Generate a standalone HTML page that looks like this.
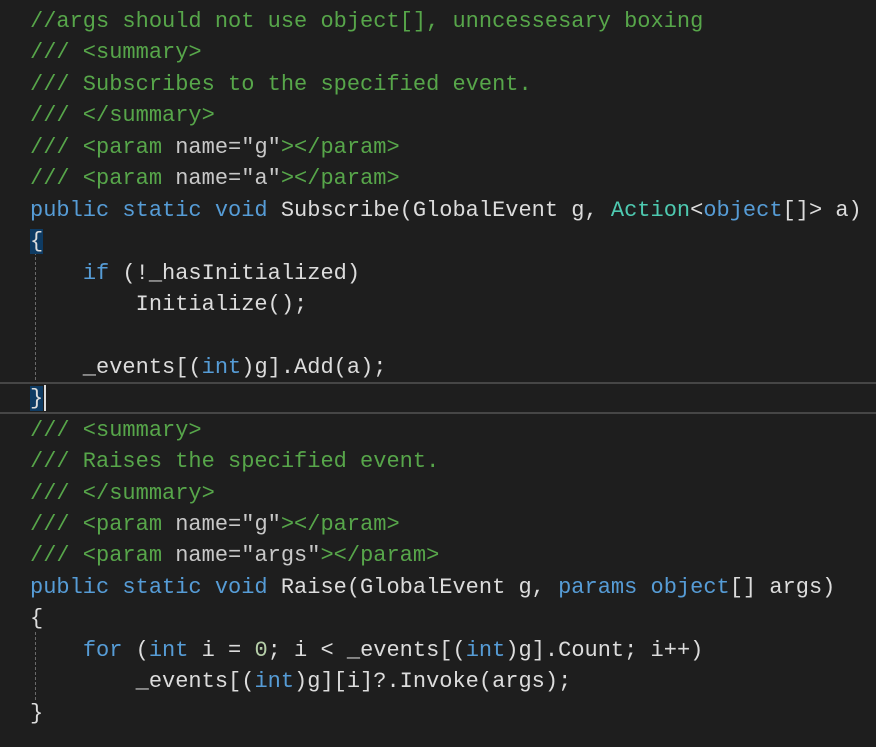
<!DOCTYPE html>
<html><head><style>
body{margin:0;background:#1e1e1e;width:876px;height:747px;overflow:hidden;position:relative}
.c{position:absolute;left:30px;top:6px;font-family:"Liberation Mono",monospace;font-size:22px;color:#dcdcdc}
.l{height:31.45px;line-height:31.45px;white-space:pre}
.g{color:#57a64a}.k{color:#569cd6}.t{color:#4ec9b0}.n{color:#b5cea8}.x{color:#c8c8c8}
.b{background:#0e3b63}
.cur{position:absolute;left:0;width:876px;top:382px;height:28px;border-top:2px solid #464646;border-bottom:2px solid #464646}
.guide{position:absolute;left:35px;width:0;border-left:1px dashed #6a6a6a}
.caret{display:inline-block;width:2px;height:26px;background:#dcdcdc;vertical-align:middle;margin-left:1px}
</style></head><body>
<div class="cur"></div>
<div class="guide" style="top:232px;height:148px"></div>
<div class="guide" style="top:632px;height:68px"></div>
<div class="c"><div class="l g">//args should not use object[], unncessesary boxing</div><div class="l g">/// &lt;summary&gt;</div><div class="l g">/// Subscribes to the specified event.</div><div class="l g">/// &lt;/summary&gt;</div><div class="l g">/// &lt;param <span class="x">name="g"</span>&gt;&lt;/param&gt;</div><div class="l g">/// &lt;param <span class="x">name="a"</span>&gt;&lt;/param&gt;</div><div class="l"><span class="k">public static void</span> Subscribe(GlobalEvent g, <span class="t">Action</span>&lt;<span class="k">object</span>[]&gt; a)</div><div class="l"><span class="b">{</span></div><div class="l">    <span class="k">if</span> (!_hasInitialized)</div><div class="l">        Initialize();</div><div class="l"> </div><div class="l">    _events[(<span class="k">int</span>)g].Add(a);</div><div class="l"><span class="b">}</span><span class="caret"></span></div><div class="l g">/// &lt;summary&gt;</div><div class="l g">/// Raises the specified event.</div><div class="l g">/// &lt;/summary&gt;</div><div class="l g">/// &lt;param <span class="x">name="g"</span>&gt;&lt;/param&gt;</div><div class="l g">/// &lt;param <span class="x">name="args"</span>&gt;&lt;/param&gt;</div><div class="l"><span class="k">public static void</span> Raise(GlobalEvent g, <span class="k">params object</span>[] args)</div><div class="l">{</div><div class="l">    <span class="k">for</span> (<span class="k">int</span> i = <span class="n">0</span>; i &lt; _events[(<span class="k">int</span>)g].Count; i++)</div><div class="l">        _events[(<span class="k">int</span>)g][i]?.Invoke(args);</div><div class="l">}</div></div>
</body></html>
